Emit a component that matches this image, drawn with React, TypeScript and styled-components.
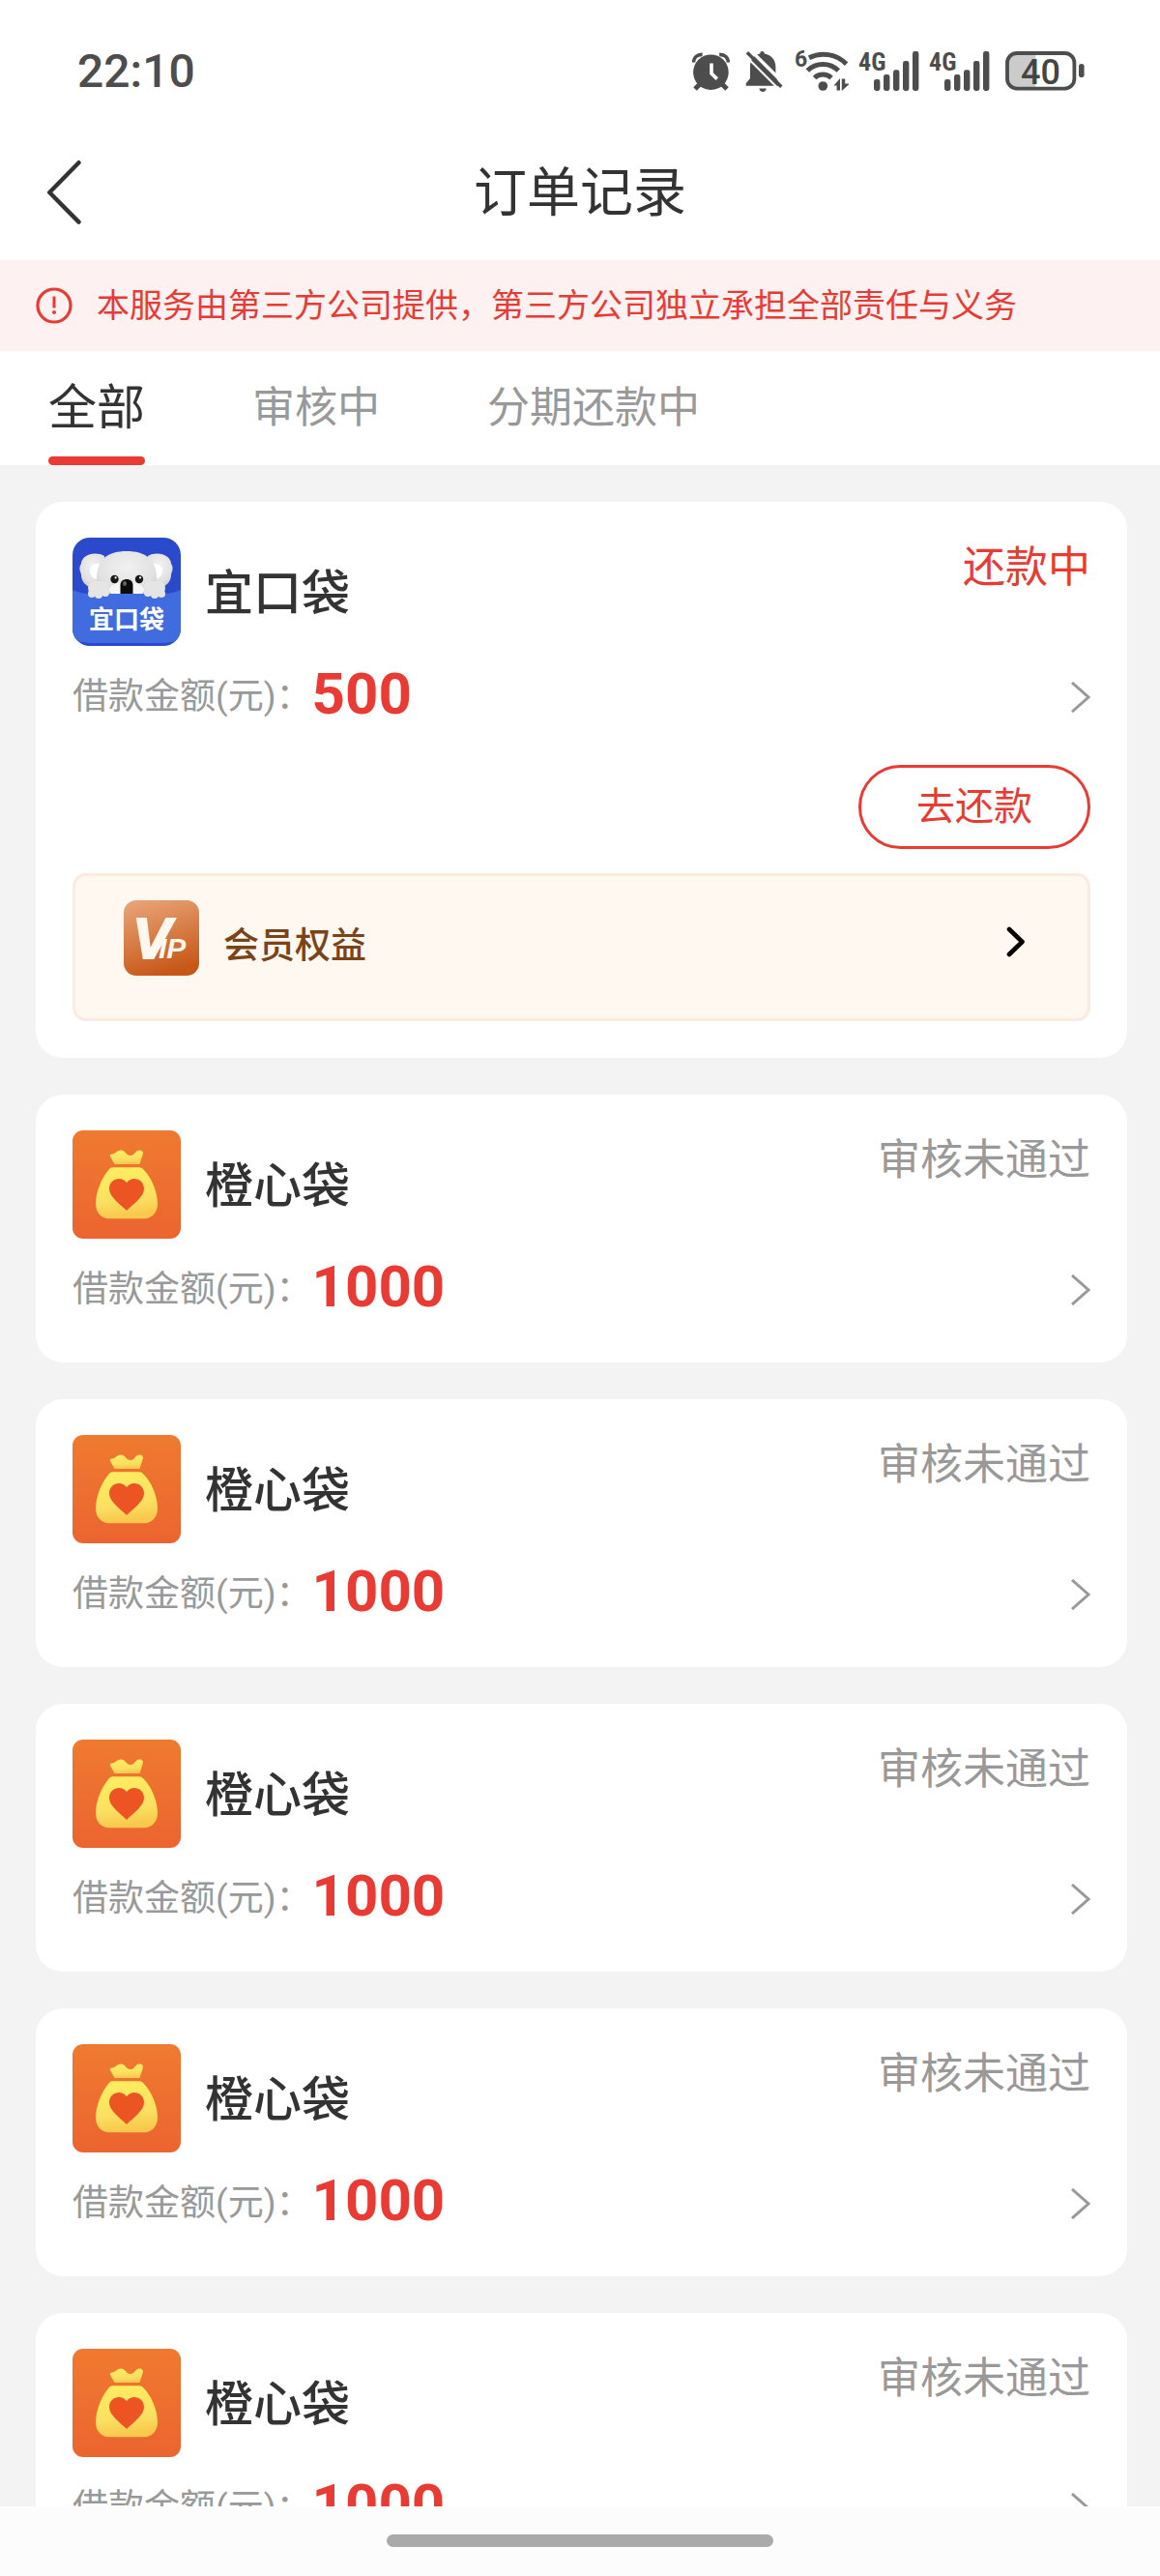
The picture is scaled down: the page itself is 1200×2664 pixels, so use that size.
import React, { useState } from 'react';
import styled, { createGlobalStyle } from 'styled-components';

const color = {
  red: '#e93b33',
  ink: '#333333',
  muted: '#999999',
  status: '#4d4d4d',
  page: '#f3f3f3',
};

const GlobalStyle = createGlobalStyle`
  *, *::before, *::after { box-sizing: border-box; }
  body {
    margin: 0;
    background: ${color.page};
    color: ${color.ink};
    font-family: Roboto, "Noto Sans CJK SC", sans-serif;
  }
  button {
    font: inherit;
    color: inherit;
    padding: 0;
    border: 0;
    background: none;
    cursor: pointer;
  }
  a { color: inherit; text-decoration: none; }
  h1, h2, p { margin: 0; font-weight: 400; }
  svg { display: block; flex: none; }
`;

const Screen = styled.div`
  display: flex;
  flex-direction: column;
  height: 100vh;
`;

const StatusBar = styled.div`
  display: flex;
  align-items: center;
  justify-content: space-between;
  height: 144px;
  padding: 0 77px 0 80px;
  background: #fff;
  color: ${color.status};
`;

const Clock = styled.time`
  padding-top: 4px;
  font-size: 48px;
  line-height: 48px;
  font-weight: 500;
`;

const StatusIcons = styled.div`
  display: flex;
  align-items: center;
  gap: 12px;
`;

const TitleBar = styled.header`
  display: grid;
  grid-template-columns: 150px 1fr 150px;
  align-items: center;
  height: 125px;
  padding-bottom: 16px;
  background: #fff;
`;

const BackButton = styled.button`
  display: flex;
  align-items: center;
  height: 100%;
  padding-left: 48px;
`;

const Title = styled.h1`
  font-size: 55px;
  line-height: 80px;
  text-align: center;
`;

const Notice = styled.p`
  display: flex;
  align-items: center;
  gap: 25px;
  height: 94px;
  padding: 0 37px;
  background: #fdf1f1;
  color: ${color.red};
  font-size: 34px;
  line-height: 48px;
`;

const Tabs = styled.nav`
  display: flex;
  gap: 111px;
  padding: 0 50px;
  background: #fff;
`;

const Tab = styled.button<{ $active: boolean }>`
  color: ${(p) => (p.$active ? color.ink : color.muted)};
  font-size: ${(p) => (p.$active ? '50px' : '44px')};
  line-height: 118px;

  &::after {
    content: "";
    display: block;
    height: 9px;
    margin-top: -9px;
    border-radius: 5px;
    background: ${(p) => (p.$active ? color.red : 'transparent')};
  }
`;

const OrderList = styled.main`
  flex: 1;
  min-height: 0;
  overflow: hidden;
  display: flex;
  flex-direction: column;
  gap: 38px;
  padding: 38px 34px 0 37px;
`;

const Card = styled.article`
  flex: none;
  padding: 37px 38px 38px;
  border-radius: 28px;
  background: #fff;
`;

const CardHead = styled.div`
  display: flex;
  align-items: flex-start;
  gap: 25px;
  height: 112px;
`;

const ProductName = styled.h2`
  flex: 1;
  font-size: 50px;
  line-height: 116px;
  font-weight: 500;
`;

const OrderState = styled.span<{ $active: boolean }>`
  font-size: 44px;
  line-height: 62px;
  color: ${(p) => (p.$active ? color.red : color.muted)};
`;

const AmountLink = styled.a`
  display: flex;
  align-items: center;
  height: 75px;
  margin-top: 15px;
`;

const AmountLabel = styled.span`
  color: ${color.muted};
  font-size: 37px;
  line-height: 56px;
`;

const Amount = styled.strong`
  flex: 1;
  padding-bottom: 5px;
  color: ${color.red};
  font-size: 60px;
  line-height: 70px;
  font-weight: 700;
`;

const Actions = styled.div`
  display: flex;
  justify-content: flex-end;
  margin-top: 33px;
`;

const RepayButton = styled.button`
  width: 240px;
  height: 87px;
  border: 3px solid ${color.red};
  border-radius: 44px;
  color: ${color.red};
  font-size: 40px;
  line-height: 80px;
`;

const VipButton = styled.button`
  display: flex;
  align-items: flex-start;
  width: 100%;
  height: 153px;
  margin-top: 25px;
  padding: 25px 64px 0 50px;
  border: 3px solid #fbeadd;
  border-radius: 14px;
  background: #fef8f1;
  text-align: left;
`;

const VipLabel = styled.span`
  flex: 1;
  padding: 20px 0 0 25px;
  color: #7b4318;
  font-size: 37px;
  line-height: 56px;
  font-weight: 500;
`;

const VipArrow = styled.span`
  padding-top: 27px;
`;

const GestureBar = styled.footer`
  display: flex;
  justify-content: center;
  flex: none;
  height: 72px;
  padding-top: 29px;
  background: #fcfcfc;

  &::after {
    content: "";
    width: 400px;
    height: 13px;
    border-radius: 7px;
    background: #aaaaaa;
  }
`;

const AlarmIcon = () => (
  <svg width="42" height="48" viewBox="0 0 42 48" fill="none" aria-hidden="true">
    <circle cx="19.4" cy="26.7" r="18.3" fill={color.status} />
    <path d="M20 17.5V28l5.8 5.6" stroke="#fff" strokeWidth="3.6" />
    <path d="M1.5 16.5C1.6 11.5 5 8.2 10.6 8.4M37.3 16.5C37.2 11.5 33.8 8.2 28.2 8.4" stroke={color.status} strokeWidth="3.6" />
    <path d="M3 44l5-5M36 44l-5-5" stroke={color.status} strokeWidth="5" />
  </svg>
);

const MutedBellIcon = () => (
  <svg width="40" height="48" viewBox="0 0 40 48" fill="none" aria-hidden="true">
    <path
      d="M16.2 7.4a2.3 2.3 0 0 1 4.6 0C28 8.6 32.4 14 32.4 21v9l4 10.7H1.7v-2.4L6 33V21C6 14 9.5 8.8 16.2 7.4Z"
      fill={color.status}
    />
    <path d="M15.4 43.5h7.4c-.5 4.6-6.9 4.6-7.4 0Z" fill={color.status} />
    <path d="M7 4.5 42 39.5" stroke="#fff" strokeWidth="3.4" />
    <path d="M1 9.5 33 41.5" stroke="#fff" strokeWidth="2" />
    <path d="M2.9 6.3 38.3 41.7" stroke={color.status} strokeWidth="3.4" />
  </svg>
);

const WifiIcon = () => (
  <svg width="56" height="48" viewBox="0 0 56 48" fill="none" aria-hidden="true">
    <text x="0" y="20.5" fontFamily="Roboto, sans-serif" fontWeight="700" fontSize="23" fill={color.status}>6</text>
    <g stroke={color.status} strokeWidth="5">
      <path d="M15 11.7A33 33 0 0 1 53.5 18.2" />
      <path d="M13.3 25A23 23 0 0 1 45.3 25" />
      <path d="M20.6 32.5A12.6 12.6 0 0 1 38 32.5" />
    </g>
    <circle cx="29.3" cy="41" r="4.8" fill={color.status} />
    <path d="M40.5 40.5 47 33v12.5h-3.4v-5ZM48.8 33.5h3.4v5H57L48.8 46Z" fill={color.status} />
  </svg>
);

const SignalIcon = () => (
  <svg width="61" height="48" viewBox="0 0 61 48" fill={color.status} overflow="visible" aria-hidden="true">
    <text x="-2" y="25" fontFamily="'Roboto Condensed', Roboto, sans-serif" fontWeight="700" fontSize="26">4G</text>
    <rect x="14" y="34" width="6.4" height="12" rx="2.4" />
    <rect x="24" y="29" width="6.4" height="17" rx="2.4" />
    <rect x="34" y="24.3" width="6.4" height="21.7" rx="2.4" />
    <rect x="44" y="15" width="6.4" height="31" rx="2.4" />
    <rect x="54" y="5" width="6.4" height="41" rx="2.4" />
  </svg>
);

const BatteryIcon = () => (
  <svg width="87" height="48" viewBox="0 0 87 48" fill="none" aria-hidden="true">
    <path d="M16 7h19.3v37H16A10 10 0 0 1 6 34V17A10 10 0 0 1 16 7Z" fill="#cbcbcb" />
    <rect x="6" y="7" width="69.4" height="36.6" rx="10" stroke={color.status} strokeWidth="3.8" />
    <rect x="80" y="18" width="5.6" height="14" rx="2.8" fill={color.status} />
    <text x="40.4" y="39" textAnchor="middle" fontFamily="Roboto, sans-serif" fontWeight="500" fontSize="36" fill="#444">40</text>
  </svg>
);

const BackIcon = () => (
  <svg width="36" height="68" viewBox="0 0 36 68" fill="none" aria-hidden="true">
    <path d="M33.5 3.2 3.2 34l30.3 30.6" stroke={color.ink} strokeWidth="4.4" strokeLinecap="round" strokeLinejoin="round" />
  </svg>
);

const WarningIcon = () => (
  <svg width="38" height="38" viewBox="0 0 38 38" fill="none" aria-hidden="true">
    <circle cx="19" cy="19" r="17" stroke={color.red} strokeWidth="3.2" />
    <path d="M19 9.5v12" stroke={color.red} strokeWidth="3" />
    <circle cx="19" cy="26" r="2" fill={color.red} />
  </svg>
);

const ChevronIcon = () => (
  <svg width="20" height="32" viewBox="0 0 20 32" fill="none" aria-hidden="true">
    <path d="M1 1l17 15L1 31" stroke={color.muted} strokeWidth="3" />
  </svg>
);

const BoldChevronIcon = () => (
  <svg width="20" height="32" viewBox="0 0 20 32" fill="none" aria-hidden="true">
    <path d="M3 3 16.5 16 3 29" stroke="#000" strokeWidth="4.6" strokeLinecap="round" strokeLinejoin="round" />
  </svg>
);

const KoalaLogo = () => (
  <svg width="112" height="112" viewBox="0 0 112 112" aria-hidden="true">
    <defs>
      <clipPath id="koala-clip"><rect width="112" height="112" rx="18" /></clipPath>
      <radialGradient id="koala-fur" cx=".5" cy=".35" r=".7">
        <stop offset="0" stopColor="#f2f1f1" />
        <stop offset=".7" stopColor="#e2e1e1" />
        <stop offset="1" stopColor="#c9c9cd" />
      </radialGradient>
    </defs>
    <g clipPath="url(#koala-clip)">
      <rect width="112" height="112" fill="#2a49cb" />
      <g fill="url(#koala-fur)">
        <path d="M33 19C22 13 9 19 9 27c-3 4-1 8 0 11 0 6 3 10 8 13l18-3Z" />
        <path d="M78 19c11-6 24 0 24 8 3 4 1 8 0 11 0 6-3 10-8 13l-18-3Z" />
      </g>
      <path d="M28 27c-7-1-11 4-10 9 1 4 4 7 8 7Z" fill="#fff" />
      <path d="M83 27c7-1 11 4 10 9-1 4-4 7-8 7Z" fill="#fff" />
      <path d="M25 60V40C26 22 37 14 56 14s30 8 31 26v20Z" fill="url(#koala-fur)" />
      <ellipse cx="56" cy="54" rx="18" ry="8" fill="#f7f6f5" />
      <path d="M0 54q9 4 18 4h76q9 0 18-4v51q-8 4-22 4H22Q8 109 0 105Z" fill="#406ce0" />
      <g fill="#e6e5e6">
        <rect x="16" y="45" width="22" height="14" rx="7" />
        <rect x="74" y="45" width="22" height="14" rx="7" />
        <circle cx="20" cy="58" r="4" /><circle cx="27" cy="59" r="4" /><circle cx="34" cy="57" r="4" />
        <circle cx="78" cy="57" r="4" /><circle cx="85" cy="59" r="4" /><circle cx="92" cy="58" r="4" />
      </g>
      <circle cx="43.5" cy="43" r="4.2" fill="#161616" />
      <circle cx="69" cy="43" r="4.2" fill="#161616" />
      <circle cx="44.6" cy="41.4" r="1.1" fill="#fff" />
      <circle cx="70.1" cy="41.4" r="1.1" fill="#fff" />
      <path d="M49.5 58v-9c0-8 13-8 13 0v9Z" fill="#0c0c0c" />
      <ellipse cx="54" cy="47.5" rx="2" ry="2.4" fill="#666" />
      <text x="56" y="94" textAnchor="middle" fontFamily="'Noto Sans CJK SC', sans-serif" fontWeight="700" fontSize="26" fill="#fff">宜口袋</text>
    </g>
  </svg>
);

const MoneyBagLogo = () => (
  <svg width="112" height="112" viewBox="0 0 112 112" aria-hidden="true">
    <defs>
      <linearGradient id="bag-bg" x1="0" y1="0" x2="0" y2="1">
        <stop offset="0" stopColor="#ef7a2f" />
        <stop offset="1" stopColor="#ec6430" />
      </linearGradient>
      <linearGradient id="bag-body" x1="0" y1="0" x2=".15" y2="1">
        <stop offset="0" stopColor="#ffee60" />
        <stop offset=".7" stopColor="#fadf60" />
        <stop offset="1" stopColor="#f9c84c" />
      </linearGradient>
    </defs>
    <rect width="112" height="112" rx="11" fill="url(#bag-bg)" />
    <path d="M43.5 35 39 27c-.6-1.4 0-2.5 1.5-2.5 4 0 5-4 9.5-4 5 0 5 5.5 10 5.5 4.600 0 4.500-5.500 9.500-5.500 3 0 4.300 2.500 3 5L69.500 35Z" fill="url(#bag-body)" />
    <path d="M41.5 38.3H69c2 0 3 .7 4.5 2.2C82 49 88 64 88 76c0 9-6 15.2-13.5 15.2h-37C30 91.2 24 85 24 76c0-12 6-27 13.5-35.5 1.3-1.5 2.3-2.2 4-2.2Z" fill="url(#bag-body)" />
    <path d="M56 83C49 76 38 68.5 38 60.5c0-10 12-14 18-6.5 6-7.5 18-3.5 18 6.5C74 68.5 63 76 56 83Z" fill="#ec5424" />
  </svg>
);

const VipLogo = () => (
  <svg width="78" height="78" viewBox="0 0 78 78" aria-hidden="true">
    <defs>
      <linearGradient id="vip-bg" x1=".2" y1="0" x2=".5" y2="1">
        <stop offset="0" stopColor="#e8a377" />
        <stop offset="1" stopColor="#c65716" />
      </linearGradient>
    </defs>
    <rect width="78" height="78" rx="13" fill="url(#vip-bg)" />
    <text
      x="9"
      y="60"
      fontFamily="'Liberation Sans', Arial, sans-serif"
      fontWeight="700"
      fontStyle="italic"
      fontSize="60"
      fill="#fff7ed"
      stroke="#fff7ed"
    >
      <tspan strokeWidth="2">V</tspan>
      <tspan dx="-13" fontSize="30" strokeWidth="0">IP</tspan>
    </text>
  </svg>
);

type Product = '宜口袋' | '橙心袋';

interface Order {
  id: number;
  product: Product;
  amount: number;
  state: string;
  repaying: boolean;
}

const orders: Order[] = [
  { id: 1, product: '宜口袋', amount: 500, state: '还款中', repaying: true },
  { id: 2, product: '橙心袋', amount: 1000, state: '审核未通过', repaying: false },
  { id: 3, product: '橙心袋', amount: 1000, state: '审核未通过', repaying: false },
  { id: 4, product: '橙心袋', amount: 1000, state: '审核未通过', repaying: false },
  { id: 5, product: '橙心袋', amount: 1000, state: '审核未通过', repaying: false },
  { id: 6, product: '橙心袋', amount: 1000, state: '审核未通过', repaying: false },
];

const tabs = ['全部', '审核中', '分期还款中'];

const OrderCard = ({ order }: { order: Order }) => (
  <Card>
    <CardHead>
      {order.product === '宜口袋' ? <KoalaLogo /> : <MoneyBagLogo />}
      <ProductName>{order.product}</ProductName>
      <OrderState $active={order.repaying}>{order.state}</OrderState>
    </CardHead>
    <AmountLink href={`#order-${order.id}`}>
      <AmountLabel>借款金额(元)：</AmountLabel>
      <Amount>{order.amount}</Amount>
      <ChevronIcon />
    </AmountLink>
    {order.repaying && (
      <>
        <Actions>
          <RepayButton type="button">去还款</RepayButton>
        </Actions>
        <VipButton type="button">
          <VipLogo />
          <VipLabel>会员权益</VipLabel>
          <VipArrow><BoldChevronIcon /></VipArrow>
        </VipButton>
      </>
    )}
  </Card>
);

export default function App() {
  const [active, setActive] = useState(tabs[0]);
  const visible = orders.filter(
    (o) => active === tabs[0] || (active === tabs[2] && o.repaying),
  );

  return (
    <Screen>
      <GlobalStyle />
      <StatusBar>
        <Clock>22:10</Clock>
        <StatusIcons>
          <AlarmIcon />
          <MutedBellIcon />
          <WifiIcon />
          <SignalIcon />
          <SignalIcon />
          <BatteryIcon />
        </StatusIcons>
      </StatusBar>
      <TitleBar>
        <BackButton type="button" aria-label="返回"><BackIcon /></BackButton>
        <Title>订单记录</Title>
      </TitleBar>
      <Notice>
        <WarningIcon />
        本服务由第三方公司提供，第三方公司独立承担全部责任与义务
      </Notice>
      <Tabs>
        {tabs.map((name) => (
          <Tab key={name} type="button" $active={name === active} onClick={() => setActive(name)}>
            {name}
          </Tab>
        ))}
      </Tabs>
      <OrderList>
        {visible.map((order) => <OrderCard key={order.id} order={order} />)}
      </OrderList>
      <GestureBar />
    </Screen>
  );
}
